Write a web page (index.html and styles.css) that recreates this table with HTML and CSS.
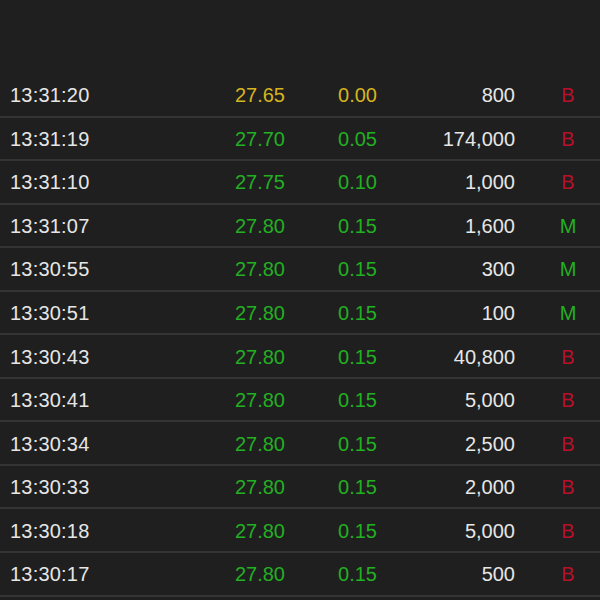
FILE: index.html
```html
<!DOCTYPE html>
<html lang="en">
<head>
  <meta charset="UTF-8" />
  <meta name="viewport" content="width=device-width, initial-scale=1.0"/>
  <title>Trade Ticks</title>
  <link rel="stylesheet" href="styles.css">
</head>
<body>

  <header class="top-bar"></header>

  <main class="ticks" id="tickList">
    <div class="tick">
      <span class="time">13:31:20</span>
      <span class="price flat">27.65</span>
      <span class="change flat">0.00</span>
      <span class="volume">800</span>
      <span class="side buy">B</span>
    </div>
    <div class="tick">
      <span class="time">13:31:19</span>
      <span class="price up">27.70</span>
      <span class="change up">0.05</span>
      <span class="volume">174,000</span>
      <span class="side buy">B</span>
    </div>
    <div class="tick">
      <span class="time">13:31:10</span>
      <span class="price up">27.75</span>
      <span class="change up">0.10</span>
      <span class="volume">1,000</span>
      <span class="side buy">B</span>
    </div>
    <div class="tick">
      <span class="time">13:31:07</span>
      <span class="price up">27.80</span>
      <span class="change up">0.15</span>
      <span class="volume">1,600</span>
      <span class="side mid">M</span>
    </div>
    <div class="tick">
      <span class="time">13:30:55</span>
      <span class="price up">27.80</span>
      <span class="change up">0.15</span>
      <span class="volume">300</span>
      <span class="side mid">M</span>
    </div>
    <div class="tick">
      <span class="time">13:30:51</span>
      <span class="price up">27.80</span>
      <span class="change up">0.15</span>
      <span class="volume">100</span>
      <span class="side mid">M</span>
    </div>
    <div class="tick">
      <span class="time">13:30:43</span>
      <span class="price up">27.80</span>
      <span class="change up">0.15</span>
      <span class="volume">40,800</span>
      <span class="side buy">B</span>
    </div>
    <div class="tick">
      <span class="time">13:30:41</span>
      <span class="price up">27.80</span>
      <span class="change up">0.15</span>
      <span class="volume">5,000</span>
      <span class="side buy">B</span>
    </div>
    <div class="tick">
      <span class="time">13:30:34</span>
      <span class="price up">27.80</span>
      <span class="change up">0.15</span>
      <span class="volume">2,500</span>
      <span class="side buy">B</span>
    </div>
    <div class="tick">
      <span class="time">13:30:33</span>
      <span class="price up">27.80</span>
      <span class="change up">0.15</span>
      <span class="volume">2,000</span>
      <span class="side buy">B</span>
    </div>
    <div class="tick">
      <span class="time">13:30:18</span>
      <span class="price up">27.80</span>
      <span class="change up">0.15</span>
      <span class="volume">5,000</span>
      <span class="side buy">B</span>
    </div>
    <div class="tick">
      <span class="time">13:30:17</span>
      <span class="price up">27.80</span>
      <span class="change up">0.15</span>
      <span class="volume">500</span>
      <span class="side buy">B</span>
    </div>
  </main>

</body>
</html>
```

FILE: styles.css
```css
body {
  margin: 0;
  background: #1f1f1f;
  color: #e6e6e6;
  font-family: 'Liberation Sans', Arial, sans-serif;
  font-size: 20px;
  overflow: hidden;
}

.top-bar {
  height: 74px;
}

.tick {
  display: grid;
  grid-template-columns: 180px 95px 92px 138px 1fr;
  align-items: center;
  box-sizing: border-box;
  height: 43.55px;
  padding: 2px 0 0 10px;
  border-bottom: 2px solid #343434;
}

.time {
  letter-spacing: 0.2px;
}

.price, .change, .volume {
  text-align: right;
}

.side {
  text-align: center;
  padding-left: 21px;
}

.flat {
  color: #d6b41e;
}

.up {
  color: #22b022;
}

.buy {
  color: #b8102a;
}

.mid {
  color: #22b022;
}
```
